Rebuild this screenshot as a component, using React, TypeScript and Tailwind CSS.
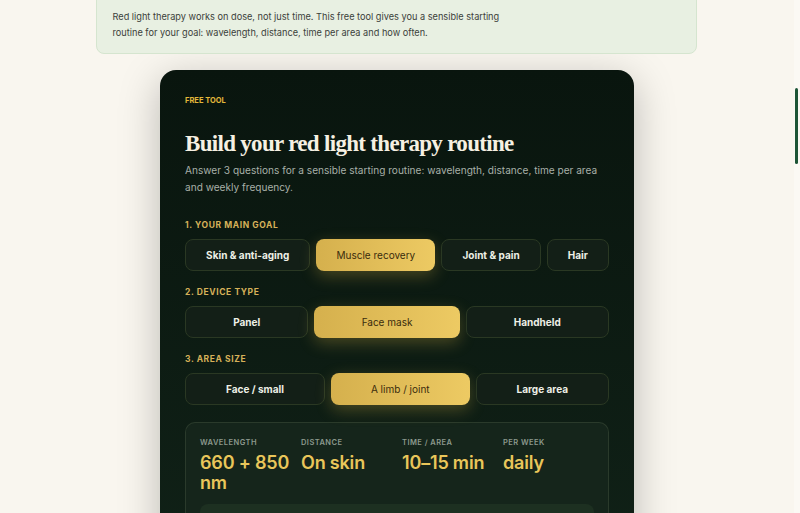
import React from "react";

type Opt = { label: string; active?: boolean };

const goals: Opt[] = [
  { label: "Skin & anti-aging" },
  { label: "Muscle recovery", active: true },
  { label: "Joint & pain" },
  { label: "Hair" },
];

const devices: Opt[] = [
  { label: "Panel" },
  { label: "Face mask", active: true },
  { label: "Handheld" },
];

const areas: Opt[] = [
  { label: "Face / small" },
  { label: "A limb / joint", active: true },
  { label: "Large area" },
];

const results = [
  { k: "WAVELENGTH", v: "660 + 850 nm" },
  { k: "DISTANCE", v: "On skin" },
  { k: "TIME / AREA", v: "10–15 min" },
  { k: "PER WEEK", v: "daily" },
];

const sans = "font-['Inter','Liberation_Sans',sans-serif]";

function Choice({ label, active }: Opt) {
  return active ? (
    <button className="h-8 flex-auto rounded-lg bg-gradient-to-r from-[#d5b04d] to-[#edca63] px-3.5 text-[10px] text-[#3a2c0d] shadow-[0_5px_16px_rgba(226,186,72,0.28)]">
      {label}
    </button>
  ) : (
    <button className="h-8 flex-auto rounded-lg border border-[#2a3823] bg-[#131f17] px-3.5 text-[10px] font-bold text-[#eef0e6]">
      {label}
    </button>
  );
}

function Step({ title, opts }: { title: string; opts: Opt[] }) {
  return (
    <>
      <div className="text-[8.5px] font-bold leading-[12px] tracking-[0.07em] text-[#d6b159]">
        {title}
      </div>
      <div className="mt-2 flex gap-1.5">
        {opts.map((o) => (
          <Choice key={o.label} {...o} />
        ))}
      </div>
    </>
  );
}

export default function App() {
  return (
    <div className={`flex h-[513px] overflow-hidden bg-[#f9f6ef] ${sans}`}>
      <main className="flex flex-1 flex-col items-center">
        {/* intro note */}
        <div className="-mt-2 w-[601px] -translate-x-px rounded-lg border border-[#d5e5cf] bg-[#e8f0e2] px-4 pb-[13px] pt-4 text-[9.2px] leading-[15.5px] text-[#3b3f3a]">
          <p>
            Red light therapy works on dose, not just time. This free tool gives you a sensible starting
            <br />
            routine for your goal: wavelength, distance, time per area and how often.
          </p>
        </div>

        {/* planner card */}
        <section className="mt-[16px] w-[474px] flex-1 rounded-t-2xl bg-gradient-to-b from-[#09150e] to-[#102117] px-[25px] pt-[26px] shadow-[0_10px_40px_rgba(0,0,0,0.25)]">
          <div className="text-[7.5px] font-bold leading-[10px] text-[#e2b73a]">FREE TOOL</div>
          <h1 className="mt-[23px] font-['Liberation_Serif',serif] text-[23px] font-bold leading-[30px] tracking-[-0.03em] text-[#f6f0e2]">
            Build your red light therapy routine
          </h1>
          <p className="mt-[2.5px] text-[10.1px] leading-[17px] text-[#a8b0a8]">
            Answer 3 questions for a sensible starting routine: wavelength, distance, time per area and weekly frequency.
          </p>

          <div className="mt-[23.5px]">
            <Step title="1. YOUR MAIN GOAL" opts={goals} />
          </div>
          <div className="mt-[15px]">
            <Step title="2. DEVICE TYPE" opts={devices} />
          </div>
          <div className="mt-[15px]">
            <Step title="3. AREA SIZE" opts={areas} />
          </div>

          {/* result summary */}
          <div className="mt-[17px] rounded-t-[10px] border border-b-0 border-[#2a3a2b] bg-[#15251b] px-[14px] pb-4 pt-[15px]">
            <div className="grid grid-cols-[repeat(4,101px)]">
              {results.map((r) => (
                <div key={r.k} className="pr-2">
                  <div className="text-[7.5px] font-semibold leading-[10px] tracking-[0.06em] text-[#8c998d]">{r.k}</div>
                  <div className="mt-[5px] text-[18px] font-semibold leading-[20px] tracking-[-0.01em] text-[#e9c65a]">{r.v}</div>
                </div>
              ))}
            </div>
            <div className="mt-[11px] h-10 rounded-t-lg bg-[#1d3021]" />
          </div>
        </section>
      </main>

      {/* scrollbar */}
      <div className="w-[6px] bg-[#fbf9f4] pt-[88px]">
        <div className="ml-px h-[76px] w-[3px] rounded-full bg-[#1d5536]" />
      </div>
    </div>
  );
}
